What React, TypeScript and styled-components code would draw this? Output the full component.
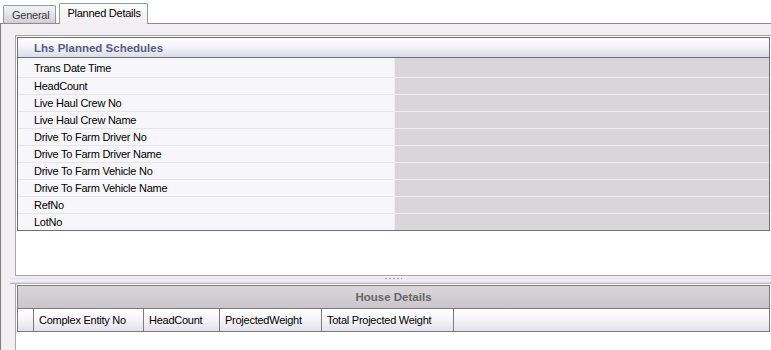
import React from "react";
import styled, { createGlobalStyle } from "styled-components";

const Global = createGlobalStyle`
  html, body { margin: 0; padding: 0; background: #ffffff; }
  body { font-family: "Liberation Sans", Arial, sans-serif; font-size: 11px; color: #000; letter-spacing: -0.25px; }
`;

const Page = styled.div`
  width: 771px;
  height: 350px;
  overflow: hidden;
  display: flex;
  flex-direction: column;
`;

const TabStrip = styled.div`
  height: 23px;
  display: flex;
  align-items: flex-end;
  padding-left: 3px;
  gap: 3px;
  flex: none;
`;

const Tab = styled.div<{ $active?: boolean }>`
  box-sizing: border-box;
  display: flex;
  align-items: center;
  border: 1px solid #919b9c;
  border-bottom: none;
  border-radius: 2px 2px 0 0;
  position: relative;
  z-index: 1;
  height: ${(p) => (p.$active ? "21px" : "18px")};
  margin-bottom: ${(p) => (p.$active ? "-1px" : "0")};
  padding: ${(p) => (p.$active ? "0 6px 0 7px" : "0 6px 0 8px")};
  background: ${(p) =>
    p.$active
      ? "linear-gradient(#fdfdfd, #f6f4f6 60%, #f2eff2)"
      : "linear-gradient(#f4f4f6, #e4e3e8 50%, #cfced6)"};
  color: ${(p) => (p.$active ? "#000" : "#3a3a3a")};
  padding-bottom: ${(p) => (p.$active ? "2px" : "0")};
`;

const Panel = styled.div`
  flex: 1;
  display: flex;
  flex-direction: column;
  background: #f2eff2;
  border-top: 1px solid #8c8c8c;
  border-left: 1px solid #7f7f7f;
  padding: 11px 0 0 14px;
  min-height: 0;
`;

const UpperPane = styled.div`
  height: 241px;
  box-sizing: border-box;
  flex: none;
  background: #ffffff;
  border-top: 1px solid #a6a6a6;
  border-left: 1px solid #a6a6a6;
  border-bottom: 1px solid #a6a6a6;
  padding: 1px 1px 0 1px;
`;

const GroupBox = styled.div`
  border: 1px solid #6f6f74;
  display: flex;
  flex-direction: column;
`;

const GroupHeader = styled.div`
  height: 19px;
  border-bottom: 1px solid #6f6f74;
  background: linear-gradient(#ffffff, #f4f4fa 45%, #dcdce8);
  display: flex;
  align-items: center;
  padding-left: 16px;
  font-weight: bold;
  font-size: 11.5px;
  letter-spacing: 0;
  color: #5a5a86;
`;

const PropRow = styled.div<{ $h: number }>`
  display: grid;
  grid-template-columns: 376px 1fr;
  height: ${(p) => p.$h}px;
  box-sizing: border-box;
`;

const PropLabel = styled.div<{ $last?: boolean }>`
  background: #f7f6fb;
  border-bottom: ${(p) => (p.$last ? "none" : "1px solid #e6e4ea")};
  display: flex;
  align-items: center;
  padding-left: 16px;
`;

const PropValue = styled.div<{ $last?: boolean }>`
  background: #d8d6d9;
  border-left: 1px solid #eeedf0;
  border-bottom: ${(p) => (p.$last ? "none" : "1px solid #eeeeee")};
`;

const Splitter = styled.div`
  flex: none;
  height: 8px;
  margin-left: -5px;
  box-sizing: border-box;
  background: linear-gradient(#f6f4f8, #e6e4ee 40%, #f4f2f6 70%, #dcdae2);
  border-bottom: 1px solid #b4b4bc;
  display: flex;
  justify-content: center;
  padding-top: 2px;
  padding-left: 5px;
`;

const Grip = styled.div`
  width: 17px;
  height: 1px;
  background: repeating-linear-gradient(90deg, #9a9aa6 0 2px, transparent 2px 4px);
`;

const LowerPane = styled.div`
  flex: 1;
  background: #ffffff;
  border-left: 1px solid #a6a6a6;
  padding: 0 1px 0 1px;
`;

const Grid = styled.div`
  border: 1px solid #7a7a80;
  border-bottom: none;
  margin-top: 1px;
`;

const GridCaption = styled.div`
  height: 22px;
  background: linear-gradient(#d9d7da, #cfcdd1 60%, #c9c7cc);
  display: flex;
  align-items: center;
  justify-content: center;
  font-weight: bold;
  font-size: 11.5px;
  color: #666666;
  letter-spacing: 0;
`;

const HeaderRow = styled.div`
  display: flex;
  height: 22px;
  border-top: 1px solid #7a7a80;
  border-bottom: 1px solid #7a7a80;
  background: linear-gradient(#ffffff, #f5f4f9 50%, #e2e0ea);
`;

const HeaderCell = styled.div<{ $w?: number }>`
  ${(p) => (p.$w ? `width: ${p.$w}px; flex: none;` : "flex: 1;")}
  box-sizing: border-box;
  border-right: 1px solid #7a7a80;
  display: flex;
  align-items: center;
  padding-left: 5px;
  white-space: nowrap;
  &:last-child { border-right: none; }
`;

const rows = [
  "Trans Date Time",
  "HeadCount",
  "Live Haul Crew No",
  "Live Haul Crew Name",
  "Drive To Farm Driver No",
  "Drive To Farm Driver Name",
  "Drive To Farm Vehicle No",
  "Drive To Farm Vehicle Name",
  "RefNo",
  "LotNo",
];

const cols: { label: string; w?: number }[] = [
  { label: "", w: 16 },
  { label: "Complex Entity No", w: 110 },
  { label: "HeadCount", w: 76 },
  { label: "ProjectedWeight", w: 102 },
  { label: "Total Projected Weight", w: 132 },
  { label: "" },
];

export default function App() {
  return (
    <Page>
      <Global />
      <TabStrip>
        <Tab>General</Tab>
        <Tab $active>Planned Details</Tab>
      </TabStrip>
      <Panel>
        <UpperPane>
          <GroupBox>
            <GroupHeader>Lhs Planned Schedules</GroupHeader>
            {rows.map((r, i) => {
              const last = i === rows.length - 1;
              const h = i === 0 ? 20 : last ? 16 : 17;
              return (
                <PropRow key={r} $h={h}>
                  <PropLabel $last={last}>{r}</PropLabel>
                  <PropValue $last={last} />
                </PropRow>
              );
            })}
          </GroupBox>
        </UpperPane>
        <Splitter>
          <Grip />
        </Splitter>
        <LowerPane>
          <Grid>
            <GridCaption>House Details</GridCaption>
            <HeaderRow>
              {cols.map((c, i) => (
                <HeaderCell key={i} $w={c.w}>
                  {c.label}
                </HeaderCell>
              ))}
            </HeaderRow>
          </Grid>
        </LowerPane>
      </Panel>
    </Page>
  );
}
